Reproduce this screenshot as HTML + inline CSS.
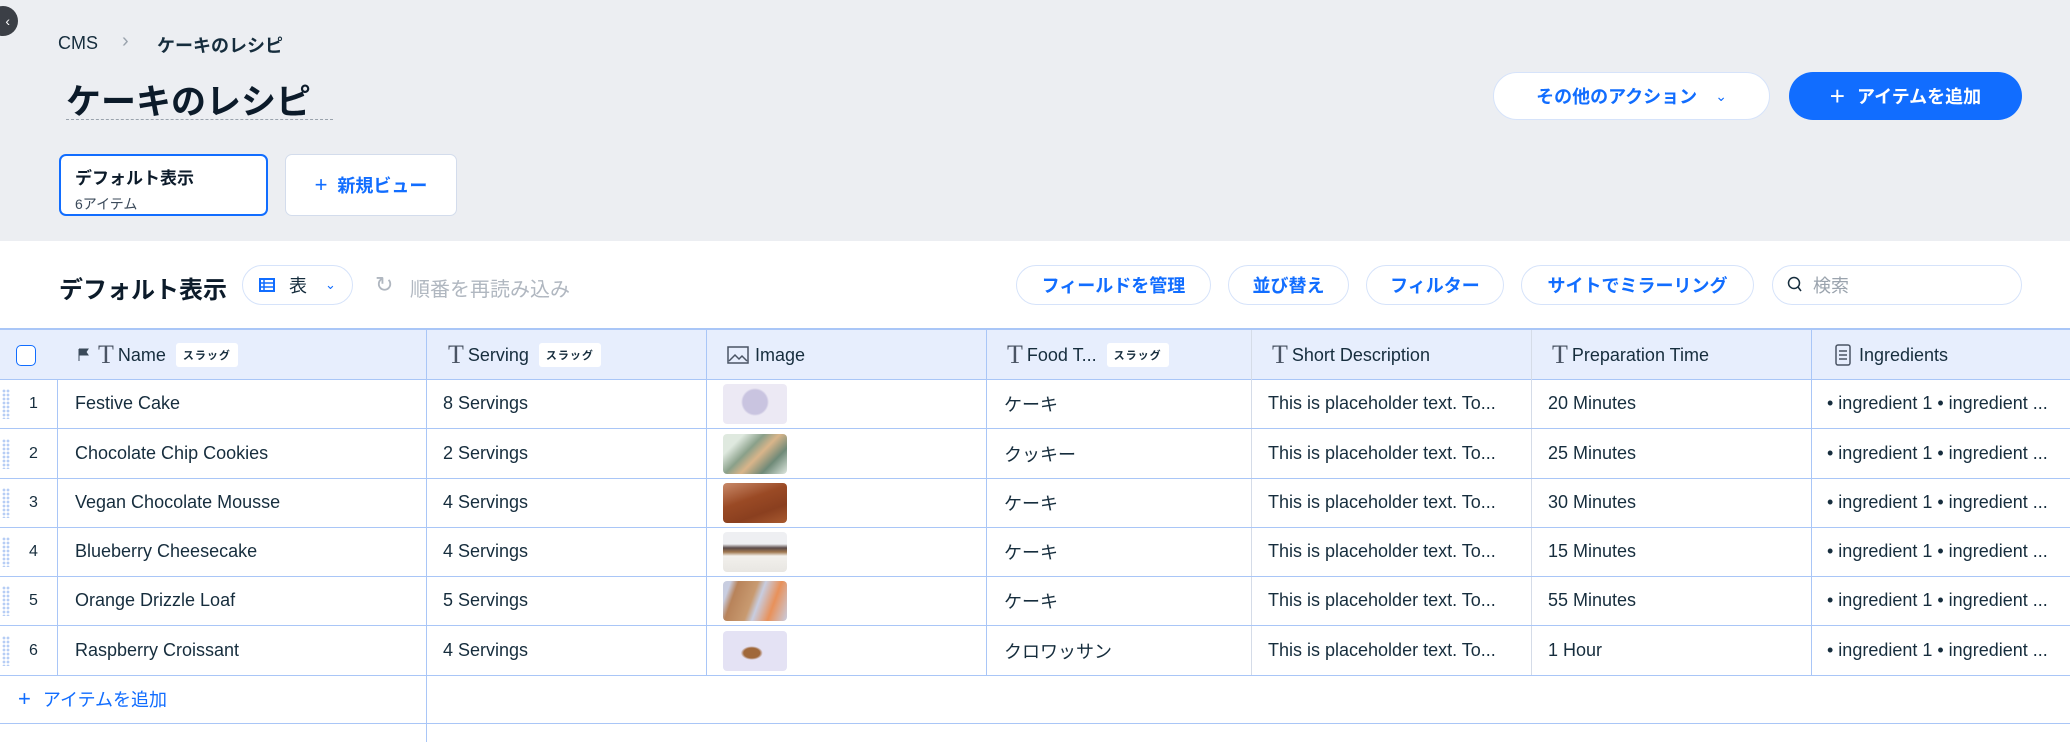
<!DOCTYPE html>
<html><head><meta charset="utf-8"><style>
*{box-sizing:border-box;margin:0;padding:0}
body{width:2070px;height:742px;overflow:hidden;background:#fff;font-family:"Liberation Sans","Noto Sans CJK JP",sans-serif;color:#162d3d;position:relative}
.a{position:absolute}
.top{left:0;top:0;width:2070px;height:241px;background:#eceef2}
.pill{position:absolute;border:1px solid #d6e3fa;border-radius:22px;background:#fff;color:#116dff;font-size:18px;display:flex;align-items:center;justify-content:center;font-weight:bold}
.row{position:absolute;left:0;width:2070px;height:50px;border-bottom:1.5px solid #a9c6f7}
.cell{position:absolute;top:0;height:100%;display:flex;align-items:center;font-size:18px;color:#162d3d;white-space:nowrap}
.vl{position:absolute;top:330px;width:1px;height:345px;background:#a9c6f7}
.badge{display:inline-block;background:#fff;border-radius:3px;font-size:11px;padding:4px 7px;margin-left:10px;color:#162d3d;font-weight:bold;letter-spacing:1px}
.th{display:flex;align-items:center;font-size:18px;color:#162d3d}
.T{font-family:"Liberation Serif",serif;font-size:26px;color:#4a5464;margin-right:4px;font-weight:normal}
.thumb{position:absolute;left:723px;top:5px;width:64px;height:40px;border-radius:4px}
.grip{position:absolute;left:2px;top:10px;width:8px;height:30px;background-image:radial-gradient(circle,#b6cdf5 1.3px,transparent 1.5px);background-size:4px 4px}
</style></head><body>
<div class="a top"></div>
<div class="a" style="left:-12px;top:6px;width:30px;height:30px;border-radius:50%;background:#3b3f46;color:#fff;font-size:14px;line-height:30px;text-align:right;padding-right:8px">‹</div>
<div class="a" style="left:58px;top:33px;font-size:18px;color:#162d3d">CMS</div>
<div class="a" style="left:122px;top:30px;font-size:20px;color:#9aa3ad">›</div>
<div class="a" style="left:157px;top:32px;font-size:18px;color:#162d3d;font-weight:bold">ケーキのレシピ</div>
<div class="a" style="left:66px;top:74px;font-size:35px;font-weight:bold;color:#0c1b2a">ケーキのレシピ</div>
<div class="a" style="left:66px;top:119px;width:267px;border-top:1.5px dashed #9aa3ad"></div>
<div class="a" style="left:59px;top:154px;width:209px;height:62px;border:2.5px solid #116dff;border-radius:7px;background:#fff;padding:8px 14px">
 <div style="font-size:17px;font-weight:bold;color:#0c1b2a">デフォルト表示</div>
 <div style="font-size:14px;color:#3b4a5a;margin-top:5px">6アイテム</div></div>
<div class="a" style="left:285px;top:154px;width:172px;height:62px;border:1.5px solid #d3dcec;border-radius:7px;background:#fff;color:#116dff;font-size:18px;font-weight:bold;display:flex;align-items:center;justify-content:center"><span style="font-weight:normal;font-size:22px;margin-right:10px">+</span>新規ビュー</div>
<div class="pill" style="left:1493px;top:72px;width:277px;height:48px;border-radius:24px">その他のアクション<span style="font-weight:normal;font-size:14px;margin-left:18px">⌄</span></div>
<div class="pill" style="left:1789px;top:72px;width:233px;height:48px;border-radius:24px;background:#116dff;color:#fff;border:none"><span style="font-weight:normal;font-size:26px;margin-right:12px">+</span>アイテムを追加</div>

<div class="a" style="left:59px;top:270px;font-size:24px;font-weight:bold;color:#0c1b2a">デフォルト表示</div>
<div class="pill" style="left:242px;top:265px;width:111px;height:40px;color:#162d3d;font-weight:normal"><svg width="16" height="14" style="margin-right:14px"><rect x="1" y="1" width="14" height="12" fill="none" stroke="#116dff" stroke-width="2"/><path d="M1 5H15M1 9H15M5 1V13" stroke="#116dff" stroke-width="1.5"/></svg>表<span style="color:#116dff;font-size:13px;margin-left:18px">⌄</span></div>
<div class="a" style="left:375px;top:272px;font-size:22px;color:#b0b7c0">↻</div>
<div class="a" style="left:410px;top:273px;font-size:20px;color:#b0b7c0">順番を再読み込み</div>
<div class="pill" style="left:1016px;top:265px;width:195px;height:40px">フィールドを管理</div>
<div class="pill" style="left:1228px;top:265px;width:121px;height:40px">並び替え</div>
<div class="pill" style="left:1366px;top:265px;width:138px;height:40px">フィルター</div>
<div class="pill" style="left:1521px;top:265px;width:233px;height:40px">サイトでミラーリング</div>
<div class="pill" style="left:1772px;top:265px;width:250px;height:40px;justify-content:flex-start;padding-left:14px;color:#9aa3ad;font-weight:normal"><svg width="16" height="18" style="margin-right:10px"><circle cx="7" cy="7" r="5.5" fill="none" stroke="#162d3d" stroke-width="1.5"/><path d="M11 11L14 15" stroke="#162d3d" stroke-width="1.5"/></svg>検索</div>

<div class="a" style="left:0;top:328px;width:2070px;height:52px;background:#e7eefd;border-top:2px solid #a9c6f7;border-bottom:1.5px solid #a9c6f7"></div>
<div class="a" style="left:16px;top:345px;width:20px;height:21px;border:1.5px solid #116dff;border-radius:5px;background:#fff"></div>
<div class="a th" style="left:78px;top:330px;height:50px"><svg width="12" height="14" style="margin-right:8px"><path d="M1 1V13M1 1H10L8 4L10 7H1" fill="#3b4a5a" stroke="#3b4a5a"/></svg><span class="T">T</span>Name<span class="badge">スラッグ</span></div>
<div class="a th" style="left:448px;top:330px;height:50px"><span class="T">T</span>Serving<span class="badge">スラッグ</span></div>
<div class="a th" style="left:727px;top:330px;height:50px"><svg width="22" height="18" style="margin-right:6px"><rect x="1" y="1" width="20" height="16" fill="none" stroke="#4a5464" stroke-width="1.5"/><path d="M2 15L8 9L12 13L15 10L20 15" fill="none" stroke="#4a5464" stroke-width="1.5"/></svg>Image</div>
<div class="a th" style="left:1007px;top:330px;height:50px"><span class="T">T</span>Food T...<span class="badge">スラッグ</span></div>
<div class="a th" style="left:1272px;top:330px;height:50px"><span class="T">T</span>Short Description</div>
<div class="a th" style="left:1552px;top:330px;height:50px"><span class="T">T</span>Preparation Time</div>
<div class="a th" style="left:1835px;top:330px;height:50px"><svg width="16" height="22" style="margin-right:8px"><rect x="1" y="1" width="14" height="20" rx="2" fill="none" stroke="#4a5464" stroke-width="1.5"/><path d="M4 7H12M4 11H12M4 15H12" stroke="#4a5464" stroke-width="1.5"/></svg>Ingredients</div>

<div class="vl" style="left:57px;height:295px;top:380px"></div>
<div class="vl" style="left:426px;height:412px"></div>
<div class="vl" style="left:706px"></div>
<div class="vl" style="left:986px"></div>
<div class="vl" style="left:1251px;background:#d5dce8"></div>
<div class="vl" style="left:1531px;background:#d5dce8"></div>
<div class="vl" style="left:1811px"></div>

<div class="row" style="top:379px"><div class="grip"></div><div class="cell" style="left:29px;font-size:16px">1</div><div class="cell" style="left:75px">Festive Cake</div><div class="cell" style="left:443px">8 Servings</div><div class="thumb" style="background:radial-gradient(circle at 50% 45%,#c9c4e0 0 12px,#ece9f4 14px)"></div><div class="cell" style="left:1004px">ケーキ</div><div class="cell" style="left:1268px">This is placeholder text. To...</div><div class="cell" style="left:1548px">20 Minutes</div><div class="cell" style="left:1827px">• ingredient 1 • ingredient ...</div></div>
<div class="row" style="top:429px"><div class="grip"></div><div class="cell" style="left:29px;font-size:16px">2</div><div class="cell" style="left:75px">Chocolate Chip Cookies</div><div class="cell" style="left:443px">2 Servings</div><div class="thumb" style="background:linear-gradient(135deg,#dfe9df 20%,#8aa08a 40%,#d9b58a 55%,#6f8a78 75%,#dfe8e0)"></div><div class="cell" style="left:1004px">クッキー</div><div class="cell" style="left:1268px">This is placeholder text. To...</div><div class="cell" style="left:1548px">25 Minutes</div><div class="cell" style="left:1827px">• ingredient 1 • ingredient ...</div></div>
<div class="row" style="top:478px"><div class="grip"></div><div class="cell" style="left:29px;font-size:16px">3</div><div class="cell" style="left:75px">Vegan Chocolate Mousse</div><div class="cell" style="left:443px">4 Servings</div><div class="thumb" style="background:linear-gradient(160deg,#c98a6a,#9a4a25 40%,#8a3f1f 70%,#a85a30)"></div><div class="cell" style="left:1004px">ケーキ</div><div class="cell" style="left:1268px">This is placeholder text. To...</div><div class="cell" style="left:1548px">30 Minutes</div><div class="cell" style="left:1827px">• ingredient 1 • ingredient ...</div></div>
<div class="row" style="top:527px"><div class="grip"></div><div class="cell" style="left:29px;font-size:16px">4</div><div class="cell" style="left:75px">Blueberry Cheesecake</div><div class="cell" style="left:443px">4 Servings</div><div class="thumb" style="background:linear-gradient(180deg,#eeeff2 30%,#5a4a48 40%,#a07850 50%,#f2f0ec 60%,#e8e6e2)"></div><div class="cell" style="left:1004px">ケーキ</div><div class="cell" style="left:1268px">This is placeholder text. To...</div><div class="cell" style="left:1548px">15 Minutes</div><div class="cell" style="left:1827px">• ingredient 1 • ingredient ...</div></div>
<div class="row" style="top:576px"><div class="grip"></div><div class="cell" style="left:29px;font-size:16px">5</div><div class="cell" style="left:75px">Orange Drizzle Loaf</div><div class="cell" style="left:443px">5 Servings</div><div class="thumb" style="background:linear-gradient(110deg,#c8cde0 10%,#b8835a 20%,#c89a70 45%,#c8cde0 55%,#e8915a 75%,#c8cde0)"></div><div class="cell" style="left:1004px">ケーキ</div><div class="cell" style="left:1268px">This is placeholder text. To...</div><div class="cell" style="left:1548px">55 Minutes</div><div class="cell" style="left:1827px">• ingredient 1 • ingredient ...</div></div>
<div class="row" style="top:626px"><div class="grip"></div><div class="cell" style="left:29px;font-size:16px">6</div><div class="cell" style="left:75px">Raspberry Croissant</div><div class="cell" style="left:443px">4 Servings</div><div class="thumb" style="background:radial-gradient(ellipse at 45% 55%,#a0683a 0 8px,#e4e2f4 11px)"></div><div class="cell" style="left:1004px">クロワッサン</div><div class="cell" style="left:1268px">This is placeholder text. To...</div><div class="cell" style="left:1548px">1 Hour</div><div class="cell" style="left:1827px">• ingredient 1 • ingredient ...</div></div>
<div class="row" style="top:675px;height:49px"><div class="cell" style="left:18px;color:#116dff"><span style="font-size:22px;margin-right:12px">+</span>アイテムを追加</div></div>
</body></html>
